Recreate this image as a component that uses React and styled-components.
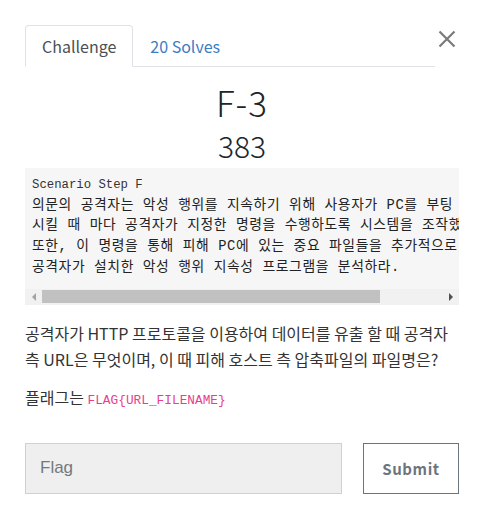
import styled, { createGlobalStyle } from 'styled-components';

const Global = createGlobalStyle`
  body {
    margin: 0;
    background: #fff;
    font-family: "Noto Sans CJK KR", "Noto Sans", sans-serif;
    color: #212529;
  }
`;

const Page = styled.div`
  padding: 25px 28px 30px 25px;
`;

const Header = styled.div`
  display: flex;
  align-items: flex-start;
`;

const Tabs = styled.div`
  flex: 1;
  display: flex;
  border-bottom: 1px solid #dee2e6;
`;

const Tab = styled.div`
  padding: 8px 16px;
  font-size: 16px;
  line-height: 24px;
  margin-bottom: -1px;
  border: 1px solid ${p => (p.$active ? '#dee2e6' : 'transparent')};
  border-bottom-color: ${p => (p.$active ? '#fff' : 'transparent')};
  border-radius: 4px 4px 0 0;
  background: ${p => (p.$active ? '#fff' : 'transparent')};
  color: ${p => (p.$active ? '#495057' : '#3b7dc4')};
  cursor: pointer;
`;

const Close = styled.button`
  width: 24px;
  height: 24px;
  margin-top: 2px;
  padding: 0;
  border: 0;
  background: none;
  display: flex;
  align-items: center;
  justify-content: center;
  cursor: pointer;
`;

const Title = styled.h2`
  margin: 14px 0 0;
  text-align: center;
  font-size: 35px;
  line-height: 42px;
  font-weight: 300;
  letter-spacing: 1px;
`;

const Points = styled.h3`
  margin: 4px 0 0;
  text-align: center;
  font-size: 30px;
  line-height: 36px;
  font-weight: 300;
`;

const PreBox = styled.div`
  margin-top: 5px;
  background: #f6f6f6;
`;

const Pre = styled.pre`
  margin: 0;
  padding: 7px 7px 10px;
  overflow: hidden;
  white-space: pre;
  font-family: "Liberation Mono", "Noto Sans CJK KR", monospace;
  font-size: 13.8px;
  letter-spacing: 0.6px;
  line-height: 20.7px;
  color: #222;
`;

const Caption = styled.span`
  font-size: 12.3px;
  letter-spacing: 0;
  color: #333;
`;

const Track = styled.div`
  display: flex;
  align-items: center;
  height: 16px;
  background: #f1f1f1;
`;

const Arrow = styled.div`
  width: 17px;
  height: 16px;
  display: flex;
  align-items: center;
  justify-content: center;
  &::after {
    content: '';
    border-top: 4px solid transparent;
    border-bottom: 4px solid transparent;
    ${p => (p.$dir === 'left'
      ? 'border-right: 4px solid #a3a3a3;'
      : 'border-left: 4px solid #505050;')}
  }
`;

const Thumb = styled.div`
  width: 338px;
  height: 13px;
  background: #c1c1c1;
`;

const Spacer = styled.div`
  flex: 1;
`;

const Text = styled.p`
  margin: ${p => p.$top || 0}px 0 0;
  font-size: 16px;
  line-height: 26px;
  color: #333;
`;

const Code = styled.code`
  font-family: "Liberation Mono", monospace;
  font-size: 12.8px;
  color: #e83e8c;
`;

const Form = styled.form`
  display: flex;
  gap: 21px;
  margin-top: 29px;
`;

const Input = styled.input`
  flex: 1;
  min-width: 0;
  height: 51px;
  box-sizing: border-box;
  padding: 0 14px;
  border: 1px solid #cdd1d6;
  background: #efefef;
  font-family: "Liberation Sans", Arial, sans-serif;
  font-size: 17px;
  color: #495057;
  outline: none;
  &::placeholder {
    color: #73797f;
  }
`;

const Submit = styled.button`
  width: 96px;
  height: 51px;
  box-sizing: border-box;
  border: 1px solid #6c757d;
  background: #fff;
  color: #6c757d;
  font-family: "Noto Sans CJK KR", "Noto Sans", sans-serif;
  font-weight: 700;
  font-size: 15px;
  letter-spacing: 0.6px;
  cursor: pointer;
`;

export default function App() {
  return (
    <Page>
      <Global />
      <Header>
        <Tabs>
          <Tab $active>Challenge</Tab>
          <Tab>20 Solves</Tab>
        </Tabs>
        <Close aria-label="Close">
          <svg width="18" height="18" viewBox="0 0 18 18">
            <path d="M1.5 1.5 L16.5 16.5 M16.5 1.5 L1.5 16.5" stroke="#7b7b7b" strokeWidth="2.2" />
          </svg>
        </Close>
      </Header>

      <Title>F-3</Title>
      <Points>383</Points>

      <PreBox>
        <Pre>
          <Caption>Scenario Step F</Caption>
          {'\n의문의 공격자는 악성 행위를 지속하기 위해 사용자가 PC를 부팅'}
          {'\n시킬 때 마다 공격자가 지정한 명령을 수행하도록 시스템을 조작했다.'}
          {'\n또한, 이 명령을 통해 피해 PC에 있는 중요 파일들을 추가적으로 유출했다.'}
          {'\n공격자가 설치한 악성 행위 지속성 프로그램을 분석하라.'}
        </Pre>
        <Track>
          <Arrow $dir="left" />
          <Thumb />
          <Spacer />
          <Arrow $dir="right" />
        </Track>
      </PreBox>

      <Text $top={15}>
        공격자가 HTTP 프로토콜을 이용하여 데이터를 유출 할 때 공격자 측 URL은 무엇이며, 이 때 피해 호스트 측 압축파일의 파일명은?
      </Text>
      <Text $top={12}>
        플래그는 <Code>FLAG{'{'}URL_FILENAME{'}'}</Code>
      </Text>

      <Form onSubmit={e => e.preventDefault()}>
        <Input placeholder="Flag" />
        <Submit type="submit">Submit</Submit>
      </Form>
    </Page>
  );
}
